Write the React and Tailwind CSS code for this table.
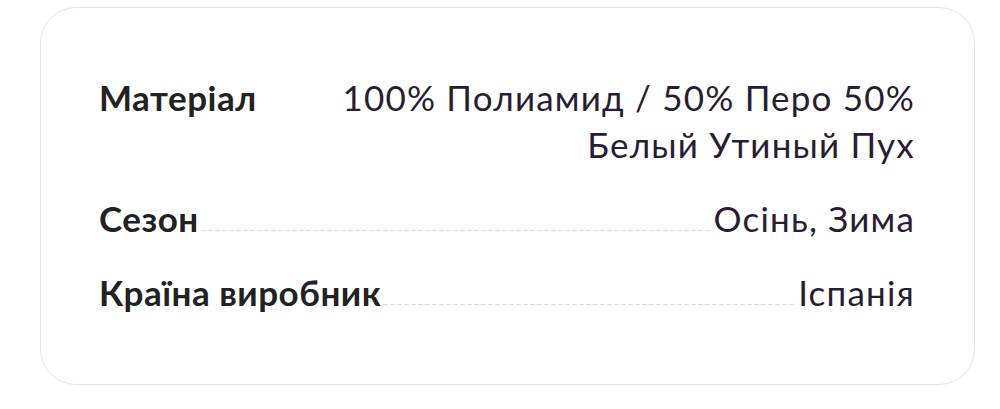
export default function App() {
  const rows = [
    { label: 'Матеріал', value: <>100% Полиамид / 50% Перо 50%<br />Белый Утиный Пух</>, dots: false },
    { label: 'Сезон', value: 'Осінь, Зима', dots: true },
    { label: 'Країна виробник', value: 'Іспанія', dots: true },
  ]

  return (
    <div className="w-[1000px] h-[409px] bg-white pt-[7px] pl-[40px]" style={{ fontFamily: 'Lato, "Noto Sans", sans-serif' }}>
      <div className="w-[935px] h-[378px] rounded-[36px] border border-[#e4e4e4] pl-[58px] pr-[59px] pt-[66px] flex flex-col gap-[27px]">
        {rows.map((r) => (
          <div key={r.label} className="flex items-start text-[35px] leading-[47px]">
            <span className="font-bold text-[#222222] tracking-[0.5px] whitespace-nowrap">{r.label}</span>
            {/* dashed filler between label and value */}
            <span
              className={`flex-1 h-[36px] mx-[2px] ${r.dots ? 'bg-[linear-gradient(to_right,#dedede_65%,transparent_0)] bg-[length:7px_1px] bg-repeat-x bg-bottom' : ''}`}
            />
            <span className="text-right text-[#2a1c31] tracking-[1.2px]">{r.value}</span>
          </div>
        ))}
      </div>
    </div>
  )
}
